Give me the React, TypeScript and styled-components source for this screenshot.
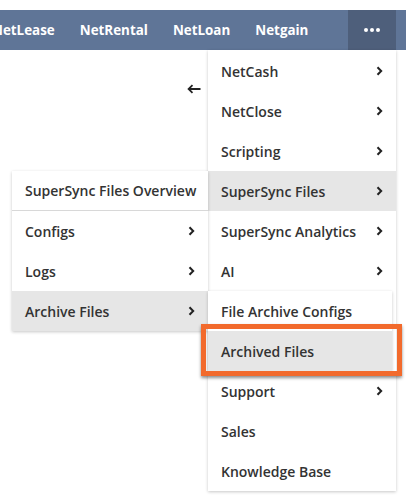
import styled, { createGlobalStyle } from 'styled-components';

const GlobalStyle = createGlobalStyle`
  html, body {
    margin: 0;
    padding: 0;
    background: #fff;
  }
  body {
    font-family: 'Open Sans', 'Liberation Sans', sans-serif;
    overflow: hidden;
  }
`;

const navItems = ['NetLease', 'NetRental', 'NetLoan', 'Netgain'];

type Item = { label: string; sub?: boolean };

const mainItems: Item[] = [
  { label: 'NetCash', sub: true },
  { label: 'NetClose', sub: true },
  { label: 'Scripting', sub: true },
  { label: 'SuperSync Files', sub: true },
  { label: 'SuperSync Analytics', sub: true },
  { label: 'AI', sub: true },
  { label: '' },
  { label: '' },
  { label: 'Support', sub: true },
  { label: 'Sales' },
  { label: 'Knowledge Base' },
];

const Chevron = () => (
  <svg width="7" height="10" viewBox="0 0 7 10">
    <path d="M1.5 1.2 L5.2 5 L1.5 8.8" fill="none" stroke="#222" strokeWidth="2" />
  </svg>
);

const App = () => {
  return (
    <Page>
      <GlobalStyle />
      <NavBar>
        <NavList>
          {navItems.map((n) => (
            <NavItem key={n}>{n}</NavItem>
          ))}
        </NavList>
        <MoreButton>
          <Dot />
          <Dot />
          <Dot />
        </MoreButton>
      </NavBar>
      <Content>
        <BackArrow>
          <svg width="14" height="10" viewBox="0 0 14 10">
            <path d="M13.5 5 H2 M5.5 1.2 L1.6 5 L5.5 8.8" fill="none" stroke="#222" strokeWidth="1.8" />
          </svg>
        </BackArrow>

        <MainMenu>
          {mainItems.map((item, i) => (
            <Row key={i} $active={item.label === 'SuperSync Files'}>
              <span>{item.label}</span>
              {item.sub && <Chevron />}
              {item.label === 'SuperSync Files' && (
                <SubMenu>
                  <Row $divider>
                    <span>SuperSync Files Overview</span>
                  </Row>
                  <Row>
                    <span>Configs</span>
                    <Chevron />
                  </Row>
                  <Row>
                    <span>Logs</span>
                    <Chevron />
                  </Row>
                  <Row $active>
                    <span>Archive Files</span>
                    <Chevron />
                    <ArchiveMenu>
                      <Row>
                        <span>File Archive Configs</span>
                      </Row>
                      <Row $active $marked>
                        <span>Archived Files</span>
                      </Row>
                    </ArchiveMenu>
                  </Row>
                </SubMenu>
              )}
            </Row>
          ))}
        </MainMenu>
      </Content>
    </Page>
  );
};

export default App;

const Page = styled.div`
  width: 406px;
  height: 504px;
  padding-top: 10px;
  box-sizing: border-box;
  position: relative;
`;

const NavBar = styled.div`
  display: flex;
  align-items: stretch;
  height: 40px;
  background: #5f7597;
  padding-right: 10px;
`;

const NavList = styled.div`
  display: flex;
  align-items: center;
  gap: 25px;
  margin-left: -8px;
  flex: 1;
`;

const NavItem = styled.div`
  color: #fff;
  font-size: 13.4px;
  font-weight: 700;
  white-space: nowrap;
`;

const MoreButton = styled.div`
  width: 48px;
  background: #4e5f7b;
  display: flex;
  align-items: center;
  justify-content: center;
  gap: 2px;
`;

const Dot = styled.span`
  width: 4px;
  height: 4px;
  border-radius: 50%;
  background: #fff;
`;

const Content = styled.div`
  position: relative;
  display: flex;
  justify-content: flex-end;
  padding: 34px 205px 0 0;
`;

const BackArrow = styled.div`
  display: flex;
  width: 14px;
  height: 10px;
`;

const Menu = styled.div`
  position: absolute;
  background: #fff;
  box-shadow: 0 1px 3px rgba(0, 0, 0, 0.22);
  color: #333;
  font-size: 14px;
  font-weight: 600;
`;

const MainMenu = styled(Menu)`
  left: 208px;
  top: 0;
  width: 188px;
  padding-top: 1px;
`;

const SubMenu = styled(Menu)`
  right: 100%;
  top: 0;
  width: 196px;
`;

const ArchiveMenu = styled(Menu)`
  left: 100%;
  top: 0;
  width: 184px;
`;

const Row = styled.div<{ $active?: boolean; $divider?: boolean; $marked?: boolean }>`
  position: relative;
  height: 40px;
  box-sizing: border-box;
  display: flex;
  align-items: center;
  justify-content: space-between;
  padding: 0 13px 0 13px;
  white-space: nowrap;
  background: ${(p) => (p.$active ? '#e6e6e6' : 'transparent')};
  border-bottom: ${(p) => (p.$divider ? '1px solid #d8d8d8' : 'none')};

  ${(p) =>
    p.$marked &&
    `
    &::after {
      content: '';
      position: absolute;
      left: -7px;
      right: -10px;
      top: -7px;
      bottom: -5px;
      border: 5px solid #f26a2c;
      box-shadow: 0 2px 3px rgba(0, 0, 0, 0.45);
      pointer-events: none;
    }
  `}
`;
